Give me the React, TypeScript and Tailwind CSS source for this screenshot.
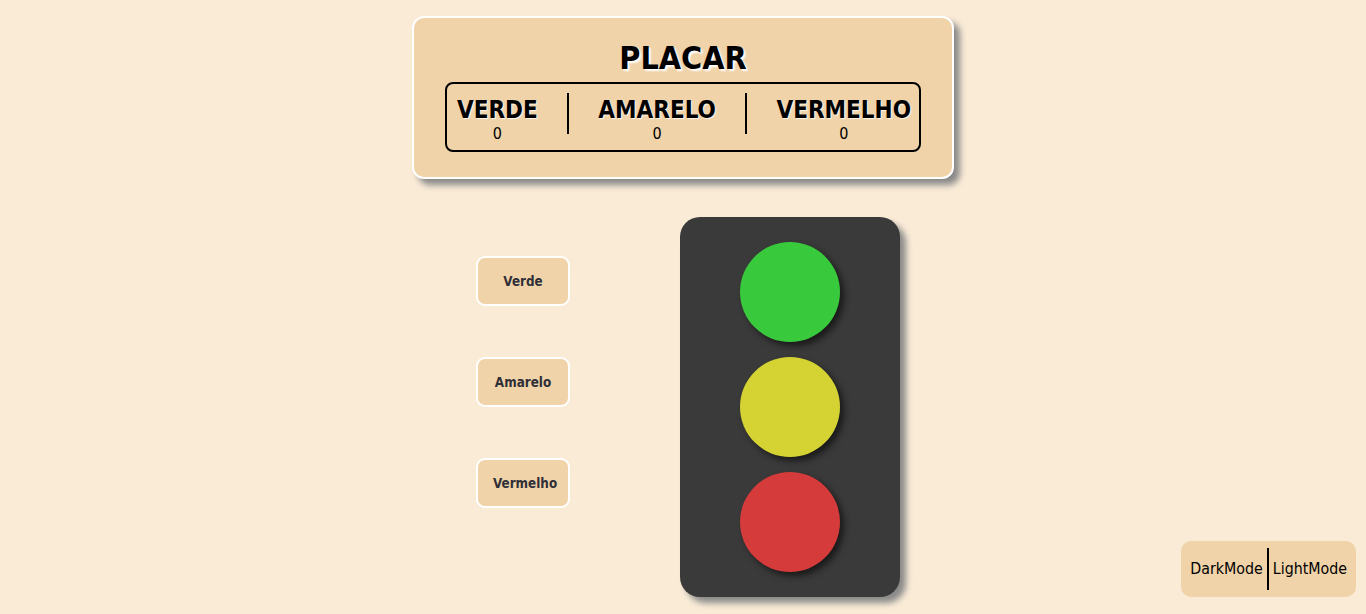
import React from "react";

const font = "font-['DejaVu_Sans_Condensed','DejaVu_Sans',sans-serif]";

function Btn({ label }: { label: string }) {
  return (
    <button className="block w-[94px] h-[50px] rounded-[9px] border-2 border-white bg-[#f0d3a9] p-0 pt-[1px] cursor-pointer">
      <div className={`px-[15px] text-center whitespace-nowrap text-[13.333px] font-bold text-[#2f2f37] ${font}`}>{label}</div>
    </button>
  );
}

export default function App() {
  const cols = [
    { name: "VERDE", v: 0 },
    { name: "AMARELO", v: 0 },
    { name: "VERMELHO", v: 0 },
  ];
  return (
    <div className={`min-h-[614px] w-full bg-[#faebd7] ${font} text-black`}>
      <div className="flex justify-center pt-[16px]">
        <div className="w-[542px] rounded-[12px] border-2 border-white bg-[#f0d3a9] px-[31px] pt-[22px] pb-[25px] shadow-[6px_6px_6px_#8a8a8a]">
          <h1 className="text-center text-[32px] font-bold leading-[37px] [text-shadow:2px_2px_2px_#ffffff] mb-[5px]">PLACAR</h1>
          <div className="flex justify-between rounded-[8px] border-2 border-black pl-[10px] pr-[8px] pt-[12px] pb-[7px]">
            {cols.map((c, i) => (
              <React.Fragment key={c.name}>
                {i > 0 && <div className="mt-[-3px] h-[41px] w-[2px] bg-black" />}
                <div className="flex flex-col items-center">
                  <div className="text-[24px] font-bold leading-[28px] [text-shadow:1px_1px_1px_#fff7ea]">{c.name}</div>
                  <div className="text-[16px] leading-[19px]">{c.v}</div>
                </div>
              </React.Fragment>
            ))}
          </div>
        </div>
      </div>

      <div className="mt-[38px] flex justify-center pl-[10px]">
        <div className="flex flex-col gap-[51px] pt-[39px]">
          <Btn label="Verde" />
          <Btn label="Amarelo" />
          <Btn label="Vermelho" />
        </div>
        <div className="ml-[110px] flex h-[380px] w-[220px] flex-col items-center gap-[15px] rounded-[20px] bg-[#3a3a3a] pt-[25px] shadow-[6px_6px_6px_#8a8a8a]">
          <div className="h-[100px] w-[100px] rounded-full bg-[#39c93c] shadow-[4px_4px_6px_#1a1a1a]" />
          <div className="h-[100px] w-[100px] rounded-full bg-[#d5d234] shadow-[4px_4px_6px_#1a1a1a]" />
          <div className="h-[100px] w-[100px] rounded-full bg-[#d43b3a] shadow-[4px_4px_6px_#1a1a1a]" />
        </div>
      </div>

      <div className="fixed bottom-[17px] right-[10px] flex h-[56px] items-center gap-[4px] rounded-[10px] bg-[#f0d3a9] px-[9px] text-[15.8px] text-black">
        <span>DarkMode</span>
        <div className="h-[42px] w-[2px] bg-black" />
        <span>LightMode</span>
      </div>
    </div>
  );
}
